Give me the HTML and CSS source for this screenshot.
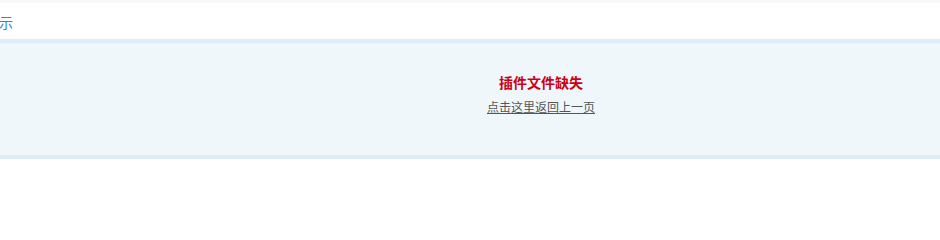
FILE: index.html
```html
<!DOCTYPE html>
<html lang="zh-CN">
<head>
<meta charset="utf-8">
<title>提示</title>
<link rel="stylesheet" href="styles.css">
</head>
<body>
<div class="topstrip"></div>
<div class="header"><span class="crumb">示</span></div>
<div class="msgbox">
  <div class="title">插件文件缺失</div>
  <div class="back"><a href="#">点击这里返回上一页</a></div>
</div>
</body>
</html>
```
FILE: styles.css
```css
html, body {
  margin: 0;
  padding: 0;
  background: #ffffff;
  font-family: "Noto Sans CJK SC", "Noto Sans", sans-serif;
}
.topstrip {
  height: 3px;
  background: #f6f8fa;
}
.header {
  height: 36px;
  box-sizing: border-box;
  padding-top: 9px;
  font-size: 14px;
  line-height: 20px;
}
.crumb {
  color: #1f8fc6;
  margin-left: -1px;
}
.msgbox {
  border-top: 4px solid #deecf8;
  border-bottom: 4px solid #deecf8;
  background: #eff7fb;
  height: 112px;
  box-sizing: content-box;
  padding-left: 142px;
  text-align: center;
}
.title {
  padding-top: 29px;
  font-size: 14px;
  line-height: 20px;
  font-weight: bold;
  color: #cc0011;
}
.back {
  margin-top: 5px;
  font-size: 12px;
  line-height: 20px;
}
.back a {
  color: #555555;
  text-decoration: underline;
}
```
